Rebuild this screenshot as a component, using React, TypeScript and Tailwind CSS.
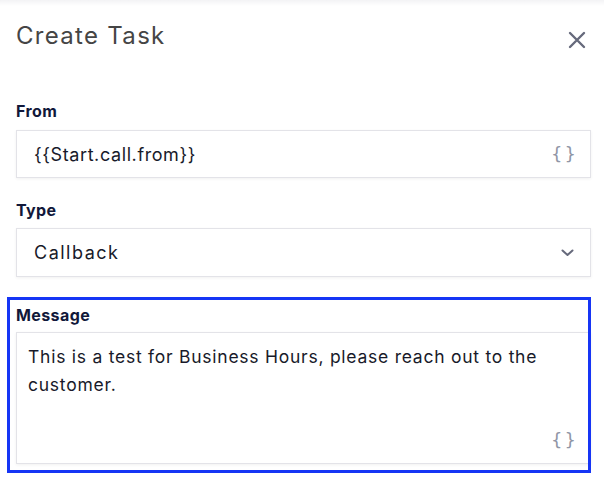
import React from "react";

function Braces() {
  return (
    <span className="flex gap-[2px] text-[18px] leading-none text-[#9096a6] font-['DejaVu_Sans',sans-serif]">
      <span>{"{"}</span>
      <span>{"}"}</span>
    </span>
  );
}

export default function App() {
  return (
    <div className="relative w-[604px] h-[484px] bg-white overflow-hidden font-['Inter',sans-serif]">
      <div className="h-[6px] bg-gradient-to-b from-[#f3f3f5] to-white" />
      <div className="flex items-center justify-between pl-4 pr-[18px] pt-[14px]">
        <h1 className="text-[24px] leading-[32px] text-[#454545] tracking-[1.3px] font-normal">Create Task</h1>
        <svg width="18" height="18" viewBox="0 0 18 18" className="mt-[7px]">
          <path d="M2 2L16 16M16 2L2 16" stroke="#666a7c" strokeWidth="2.4" strokeLinecap="round" />
        </svg>
      </div>

      <div className="px-4 pt-[49px]">
        <div className="text-[16px] leading-[20px] font-bold tracking-[0.4px] text-[#11183a]">From</div>
        <div className="mt-[9px] h-[48px] w-[575px] border border-[#e3e3e8] bg-white shadow-[0_1px_3px_rgba(0,0,0,0.06)] flex items-center justify-between pl-[17px] pr-[14px]">
          <span className="text-[18px] tracking-[0.6px] text-[#181a2a]">{"{{Start.call.from}}"}</span>
          <Braces />
        </div>

        <div className="mt-[22px] text-[16px] leading-[20px] font-bold tracking-[0.4px] text-[#11183a]">Type</div>
        <div className="mt-[8px] h-[49px] w-[575px] border border-[#e3e3e8] bg-white shadow-[0_1px_3px_rgba(0,0,0,0.06)] flex items-center justify-between pl-[17px] pr-[16px]">
          <span className="text-[18px] tracking-[1.5px] text-[#181a2a]">Callback</span>
          <svg width="13" height="8" viewBox="0 0 13 8">
            <path d="M1.5 1.5L6.5 6L11.5 1.5" stroke="#666a7c" strokeWidth="2" fill="none" strokeLinecap="round" strokeLinejoin="round" />
          </svg>
        </div>

        <div className="mt-[28px] text-[16px] leading-[20px] font-bold tracking-[0.4px] text-[#11183a]">Message</div>
        <div className="relative mt-[7px] h-[132px] w-[575px] border border-[#e3e3e8] bg-white shadow-[0_1px_3px_rgba(0,0,0,0.06)] pl-[11px] pt-[10px] pr-[30px]">
          <p className="text-[17.5px] leading-[28px] tracking-[0.75px] text-[#181a2a]">
            This is a test for Business Hours, please reach out to the customer.
          </p>
          <div className="absolute right-[14px] bottom-[14px]">
            <Braces />
          </div>
        </div>
      </div>

      <div className="absolute left-[7px] top-[297px] w-[584px] h-[176px] border-[3.5px] border-[#1635f5]" />
    </div>
  );
}
